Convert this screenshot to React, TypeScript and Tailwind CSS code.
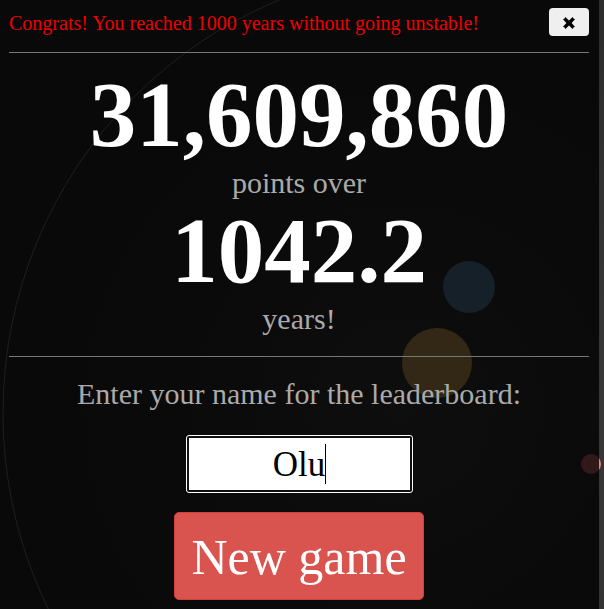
import React, { useState } from 'react'

interface Planet {
  cx: number
  cy: number
  r: number
  color: string
}

const ORBIT = { cx: 450, cy: 413, r: 447 }

const PLANETS: Planet[] = [
  { cx: 469, cy: 287, r: 26, color: '#6fa0cd' },
  { cx: 437, cy: 363, r: 35, color: '#ffc86e' },
  { cx: 591, cy: 464, r: 10, color: '#f97c7c' },
]

function Scene() {
  return (
    <svg className="absolute inset-0 w-full h-full" aria-hidden="true">
      <defs>
        <radialGradient id="glow" gradientUnits="userSpaceOnUse" cx="400" cy="410" r="420">
          <stop offset="0" stopColor="#464646" />
          <stop offset="0.5" stopColor="#363636" />
          <stop offset="1" stopColor="#2d2d2d" />
        </radialGradient>
      </defs>
      <rect width="100%" height="100%" fill="url(#glow)" />
      <circle cx={ORBIT.cx} cy={ORBIT.cy} r={ORBIT.r} fill="none" stroke="#969696" />
      {PLANETS.map((p) => (
        <circle key={p.color} cx={p.cx} cy={p.cy} r={p.r} fill={p.color} />
      ))}
    </svg>
  )
}

function Stat({ value, label }: { value: string; label: string }) {
  return (
    <p className="text-center">
      <strong className="block text-[93px] leading-[102px] font-bold text-white">{value}</strong>
      <span className="block text-[30px] leading-[34px] text-[#aaaaaa]">{label}</span>
    </p>
  )
}

export default function App() {
  const [name, setName] = useState('Olu')

  return (
    <main className="relative min-h-screen overflow-hidden bg-[#2d2d2d] font-['Liberation_Serif',serif]">
      <Scene />
      <section className="relative min-h-screen mr-[5px] pl-[9px] pr-[10px] pt-2 pb-2 bg-black/80">
        <header className="flex items-start justify-between pb-[14px] border-b border-[#777777]">
          <p className="text-[20px] leading-[30px] text-[#ee0000]">
            Congrats! You reached 1000 years without going unstable!
          </p>
          <button
            type="button"
            aria-label="Close"
            className="flex items-center justify-center w-10 h-7 rounded bg-[#efefef] text-black"
          >
            <svg viewBox="0 0 12 12" className="w-3 h-3 mt-0.5" fill="currentColor" aria-hidden="true">
              <path d="M2.4 0 6 3.5 9.6 0 10.5 1.4 12 2.3 8.6 6l3.4 3.7-1.5.9L9.6 12 6 8.5 2.4 12l-.9-1.4L0 9.7 3.4 6 0 2.3l1.5-.9z" />
            </svg>
          </button>
        </header>

        <div className="pt-[11px] pb-5 border-b border-[#777777]">
          <Stat value="31,609,860" label="points over" />
          <Stat value="1042.2" label="years!" />
        </div>

        <form className="flex flex-col items-center pt-5" onSubmit={(e) => e.preventDefault()}>
          <label htmlFor="player" className="text-[30px] leading-[34px] text-[#aaaaaa]">
            Enter your name for the leaderboard:
          </label>
          <div className="relative mt-6 p-0.5 rounded-[3px] border border-white bg-[#101010]">
            <input
              id="player"
              type="text"
              value={name}
              onChange={(e) => setName(e.target.value)}
              className="block w-[221px] h-[52px] pt-0.5 bg-white text-center text-[35px] text-black outline-none"
            />
            {name === 'Olu' && (
              <span className="absolute left-1/2 top-2 ml-[26px] w-px h-10 bg-black pointer-events-none" />
            )}
          </div>
          <button
            type="submit"
            className="mt-[19px] w-[250px] h-[88px] pt-0.5 rounded-[5px] border border-[#d43f3a] bg-[#d9534f] text-[50px] text-white"
          >
            New game
          </button>
        </form>
      </section>
    </main>
  )
}
